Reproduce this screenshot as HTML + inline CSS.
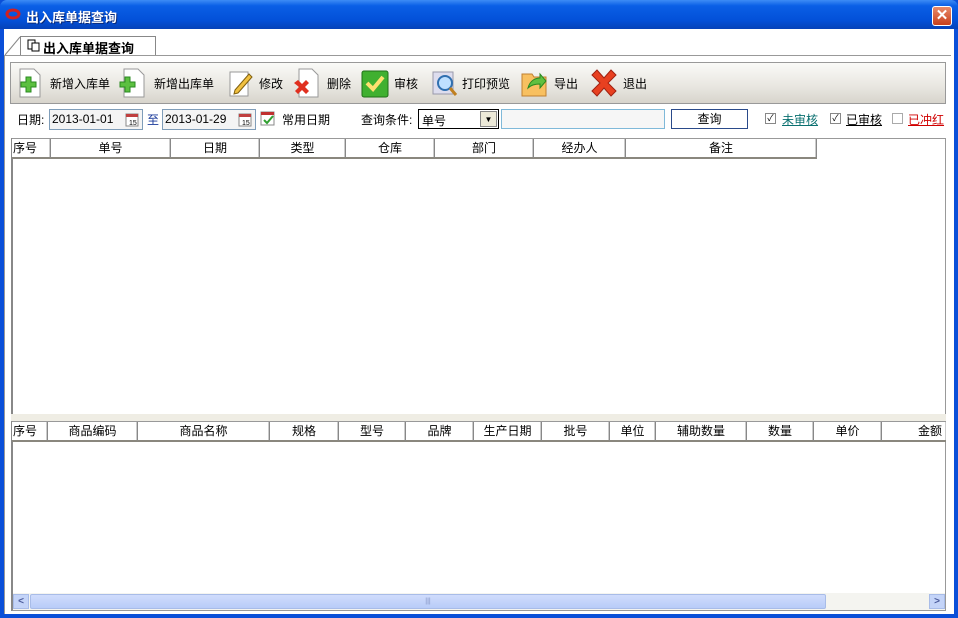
<!DOCTYPE html><html><head><meta charset="utf-8"><style>
*{box-sizing:border-box;margin:0;padding:0}
body{width:958px;height:618px;overflow:hidden;position:relative;background:#0a4fd8;font:12px "Liberation Sans","Noto Sans CJK SC","WenQuanYi Zen Hei",sans-serif;color:#000}
.a{position:absolute}
.title{left:0;top:0;width:958px;height:29px;background:linear-gradient(#3d8cf5,#0a5fe6 20%,#0350d8 70%,#0542b8);border-radius:7px 7px 0 0}
.title span{position:absolute;left:26px;top:7px;color:#fff;font-weight:bold;font-size:13px;text-shadow:1px 1px #0a2a7a}
.close{left:932px;top:6px;width:20px;height:20px;border:1px solid #fff;border-radius:3px;background:linear-gradient(#e88a6a,#c8401c);color:#fff;font-weight:bold;text-align:center;line-height:18px;font-size:15px}
.client{left:4px;top:29px;width:950px;height:585px;background:#fff}
.tab{left:20px;top:36px;width:136px;height:20px;border:1px solid #888;border-bottom:none;background:#fff;font-weight:bold;font-size:13px;padding:1px 0 0 22px}
.panel{left:4px;top:55px;width:947px;height:559px;border:1px solid #999;border-right:none;border-bottom:none}
.tb{left:10px;top:62px;width:936px;height:42px;border:1px solid #999;background:linear-gradient(#fafaf8,#e8e6e0 60%,#d8d4cc)}
.tb span{position:absolute;top:12px}
.ico{position:absolute;top:5px;width:28px;height:30px}
.lbl{top:111px}
.inp{height:21px;border:1px solid #7f9db9;background:#f4f4f4;padding:2px 2px;font-size:12px}
.grid{border:1px solid #999;background:#fff}
.hd{position:absolute;height:20px;background:#fff;border-right:1px solid #888;border-bottom:2px solid #8a877e;text-align:center;line-height:19px;box-shadow:inset -1px 0 #ccc}
</style></head><body>
<div class="a title"><span>出入库单据查询</span>
<svg class="a" style="left:5px;top:7px" width="16" height="14"><ellipse cx="8" cy="7" rx="6" ry="4" fill="none" stroke="#d02020" stroke-width="3"/></svg></div>
<div class="a close">✕</div>
<div class="a client"></div>
<svg class="a" style="left:4px;top:36px" width="20" height="22"><line x1="16" y1="1" x2="1" y2="19" stroke="#888"/></svg>
<div class="a tab">出入库单据查询</div>
<svg class="a" style="left:27px;top:39px" width="14" height="13"><rect x="1" y="1" width="7" height="9" fill="#fff" stroke="#000"/><rect x="5" y="4" width="7" height="8" fill="#fff" stroke="#000"/></svg>
<div class="a panel"></div>
<div class="a tb">
<svg class="ico" style="left:3px" viewBox="0 0 28 30"><path d="M6 1h14l6 6v22H6z" fill="#fff" stroke="#999"/><path d="M7 14h5v-5h5v5h5v5h-5v5h-5v-5H7z" fill="#5cc040" stroke="#2a8a20"/></svg><span style="left:39px">新增入库单</span>
<svg class="ico" style="left:107px" viewBox="0 0 28 30"><path d="M6 1h14l6 6v22H6z" fill="#fff" stroke="#999"/><path d="M2 14h5v-5h5v5h5v5h-5v5H7v-5H2z" fill="#5cc040" stroke="#2a8a20"/></svg><span style="left:143px">新增出库单</span>
<svg class="ico" style="left:216px" viewBox="0 0 28 30"><path d="M3 4h18v24H3z" fill="#fff" stroke="#999"/><path d="M8 22l14-16 3 3-14 16-4 1z" fill="#f0c040" stroke="#806010"/></svg><span style="left:248px">修改</span>
<svg class="ico" style="left:280px" viewBox="0 0 28 30"><path d="M8 1h13l6 6v22H8z" fill="#fff" stroke="#999"/><path d="M3 15l4-3 4 4 4-4 3 3-4 4 4 4-3 3-4-4-4 4-3-3 4-4z" fill="#e03020"/></svg><span style="left:316px">删除</span>
<svg class="ico" style="left:350px" viewBox="0 0 28 30"><rect x="1" y="3" width="26" height="26" rx="2" fill="#40b030" stroke="#207018"/><path d="M6 15l6 6 10-12" fill="none" stroke="#ffe070" stroke-width="4"/></svg><span style="left:383px">审核</span>
<svg class="ico" style="left:420px" viewBox="0 0 28 30"><rect x="2" y="4" width="20" height="22" fill="#dde" stroke="#99a"/><circle cx="14" cy="15" r="7" fill="#bfe0ff" stroke="#3070b0" stroke-width="2"/><path d="M19 20l6 7" stroke="#c08020" stroke-width="3"/></svg><span style="left:451px">打印预览</span>
<svg class="ico" style="left:509px" viewBox="0 0 28 30"><path d="M2 6h10l2 3h12v19H2z" fill="#f8c060" stroke="#c08030"/><path d="M8 20c2-8 8-10 12-10v-4l6 7-6 7v-4c-5 0-9 1-12 4z" fill="#60c040" stroke="#2a8a20"/></svg><span style="left:543px">导出</span>
<svg class="ico" style="left:579px" viewBox="0 0 28 30"><path d="M2 7l5-5 7 8 7-8 5 5-8 8 8 8-5 5-7-8-7 8-5-5 8-8z" fill="#e84020" stroke="#a02010"/></svg><span style="left:612px">退出</span>
</div>
<span class="a lbl" style="left:17px">日期:</span>
<div class="a inp" style="left:49px;top:109px;width:94px">2013-01-01</div>
<svg class="a" style="left:125px;top:112px" width="15" height="15"><rect x="1" y="2" width="12" height="12" fill="#fff" stroke="#888"/><rect x="1" y="2" width="12" height="3" fill="#c04040"/><text x="4" y="13" font-size="7">15</text></svg>
<span class="a lbl" style="left:147px;color:#1a3a9a">至</span>
<div class="a inp" style="left:162px;top:109px;width:94px">2013-01-29</div>
<svg class="a" style="left:238px;top:112px" width="15" height="15"><rect x="1" y="2" width="12" height="12" fill="#fff" stroke="#888"/><rect x="1" y="2" width="12" height="3" fill="#c04040"/><text x="4" y="13" font-size="7">15</text></svg>
<svg class="a" style="left:260px;top:110px" width="16" height="17"><rect x="1" y="2" width="13" height="13" fill="#fff" stroke="#888"/><rect x="1" y="2" width="13" height="3" fill="#c03030"/><path d="M4 10l3 3 6-7" stroke="#30a030" stroke-width="2" fill="none"/></svg>
<span class="a lbl" style="left:282px">常用日期</span>
<span class="a lbl" style="left:361px">查询条件:</span>
<div class="a" style="left:418px;top:109px;width:81px;height:20px;border:1px solid #000;background:#fff;padding:2px 3px">单号</div>
<div class="a" style="left:480px;top:111px;width:17px;height:16px;background:#ece9d8;border:1px solid #888;font-size:8px;text-align:center;line-height:15px">▼</div>
<div class="a" style="left:501px;top:109px;width:164px;height:20px;border:1px solid #7fb9d9;background:#f6f6f6"></div>
<div class="a" style="left:671px;top:109px;width:77px;height:20px;border:1px solid #2a4a8a;background:#fff;text-align:center;line-height:18px">查询</div>
<div class="a" style="left:765px;top:113px;width:11px;height:11px;border:1px solid #888;font-size:9px;line-height:9px;text-align:center">✓</div>
<span class="a lbl" style="left:782px;color:#0a7070;text-decoration:underline">未审核</span>
<div class="a" style="left:830px;top:113px;width:11px;height:11px;border:1px solid #888;font-size:9px;line-height:9px;text-align:center">✓</div>
<span class="a lbl" style="left:846px;text-decoration:underline">已审核</span>
<div class="a" style="left:892px;top:113px;width:11px;height:11px;border:1px solid #aaa"></div>
<span class="a lbl" style="left:908px;color:#d00000;text-decoration:underline">已冲红</span>

<div class="a grid" style="left:11px;top:138px;width:935px;height:278px;border-left:2px solid #888"></div>
<div class="a hd" style="left:12px;top:139px;width:39px;text-align:left;padding-left:1px">序号</div>
<div class="a hd" style="left:51px;top:139px;width:120px">单号</div>
<div class="a hd" style="left:171px;top:139px;width:89px">日期</div>
<div class="a hd" style="left:260px;top:139px;width:86px">类型</div>
<div class="a hd" style="left:346px;top:139px;width:89px">仓库</div>
<div class="a hd" style="left:435px;top:139px;width:99px">部门</div>
<div class="a hd" style="left:534px;top:139px;width:92px">经办人</div>
<div class="a hd" style="left:626px;top:139px;width:191px">备注</div>
<div class="a" style="left:11px;top:414px;width:935px;height:7px;background:#efede4"></div>

<div class="a grid" style="left:11px;top:421px;width:935px;height:190px;border-left:2px solid #888"></div>
<div class="a hd" style="left:12px;top:422px;width:36px;text-align:left;padding-left:1px">序号</div>
<div class="a hd" style="left:48px;top:422px;width:90px">商品编码</div>
<div class="a hd" style="left:138px;top:422px;width:132px">商品名称</div>
<div class="a hd" style="left:270px;top:422px;width:69px">规格</div>
<div class="a hd" style="left:339px;top:422px;width:67px">型号</div>
<div class="a hd" style="left:406px;top:422px;width:68px">品牌</div>
<div class="a hd" style="left:474px;top:422px;width:68px">生产日期</div>
<div class="a hd" style="left:542px;top:422px;width:68px">批号</div>
<div class="a hd" style="left:610px;top:422px;width:46px">单位</div>
<div class="a hd" style="left:656px;top:422px;width:91px">辅助数量</div>
<div class="a hd" style="left:747px;top:422px;width:67px">数量</div>
<div class="a hd" style="left:814px;top:422px;width:68px">单价</div>
<div class="a hd" style="left:882px;top:422px;width:64px;text-align:right;padding-right:4px;border-right:none">金额</div>
<div class="a" style="left:13px;top:593px;width:932px;height:17px;background:#f4f4f0"></div>
<div class="a" style="left:13px;top:594px;width:16px;height:15px;background:#c4d4f8;border:1px solid #a8bce8;color:#4a5a9a;font-size:10px;text-align:center;line-height:13px;font-weight:bold">&lt;</div>
<div class="a" style="left:30px;top:594px;width:796px;height:15px;background:linear-gradient(#d0dcfc,#b8ccf8);border:1px solid #a8bce8;border-radius:2px;text-align:center;font-size:7px;line-height:13px;color:#8090c0">|||</div>
<div class="a" style="left:929px;top:594px;width:16px;height:15px;background:#c4d4f8;border:1px solid #a8bce8;color:#4a5a9a;font-size:10px;text-align:center;line-height:13px;font-weight:bold">&gt;</div>
</body></html>
